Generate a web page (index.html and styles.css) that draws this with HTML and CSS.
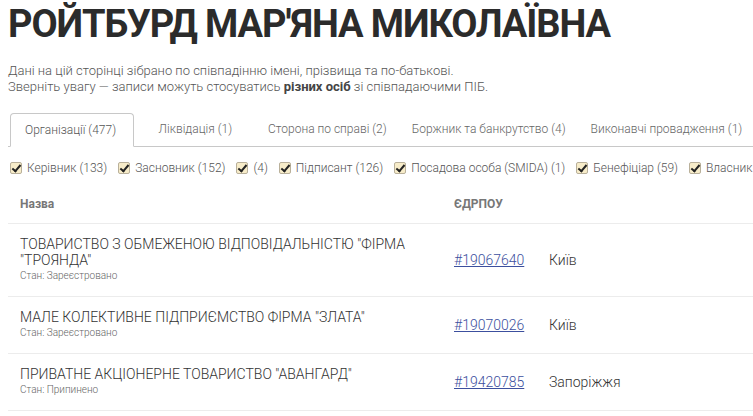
FILE: index.html
```html
<!DOCTYPE html>
<html lang="uk">
<head>
<meta charset="utf-8">
<title>Ройтбурд Мар'яна Миколаївна</title>
<link rel="stylesheet" href="styles.css">
</head>
<body>
<div class="page">
  <h1 class="title">РОЙТБУРД МАР'ЯНА МИКОЛАЇВНА</h1>
  <p class="note">Дані на цій сторінці зібрано по співпадінню імені, прізвища та по-батькові.<br>Зверніть увагу — записи можуть стосуватись <b>різних осіб</b> зі співпадаючими ПІБ.</p>

  <ul class="tabs">
    <li class="tab active">Організації (477)</li>
    <li class="tab tab-wide">Ліквідація (1)</li>
    <li class="tab">Сторона по справі (2)</li>
    <li class="tab">Боржник та банкрутство (4)</li>
    <li class="tab">Виконавчі провадження (1)</li>
  </ul>

  <div class="filters">
    <label class="filter"><span class="box"></span>Керівник (133)</label>
    <label class="filter"><span class="box"></span>Засновник (152)</label>
    <label class="filter"><span class="box"></span>(4)</label>
    <label class="filter"><span class="box"></span>Підписант (126)</label>
    <label class="filter"><span class="box"></span>Посадова особа (SMIDA) (1)</label>
    <label class="filter"><span class="box"></span>Бенефіціар (59)</label>
    <label class="filter"><span class="box"></span>Власник</label>
  </div>

  <table class="grid">
    <thead>
      <tr><th class="c-name">Назва</th><th class="c-code">ЄДРПОУ</th><th class="c-city"></th></tr>
    </thead>
    <tbody>
      <tr>
        <td class="c-name"><div class="org">ТОВАРИСТВО З ОБМЕЖЕНОЮ ВІДПОВІДАЛЬНІСТЮ "ФІРМА "ТРОЯНДА"</div><div class="state">Стан: Зареєстровано</div></td>
        <td class="c-code"><a href="#">#19067640</a></td>
        <td class="c-city">Київ</td>
      </tr>
      <tr>
        <td class="c-name"><div class="org">МАЛЕ КОЛЕКТИВНЕ ПІДПРИЄМСТВО ФІРМА "ЗЛАТА"</div><div class="state">Стан: Зареєстровано</div></td>
        <td class="c-code"><a href="#">#19070026</a></td>
        <td class="c-city">Київ</td>
      </tr>
      <tr>
        <td class="c-name"><div class="org">ПРИВАТНЕ АКЦІОНЕРНЕ ТОВАРИСТВО "АВАНГАРД"</div><div class="state">Стан: Припинено</div></td>
        <td class="c-code"><a href="#">#19420785</a></td>
        <td class="c-city">Запоріжжя</td>
      </tr>
    </tbody>
  </table>
</div>
</body>
</html>
```
FILE: styles.css
```css
html, body {
  margin: 0;
  padding: 0;
  background: #fff;
}
body {
  font-family: Roboto, "Noto Sans", sans-serif;
  color: #444;
  overflow: hidden;
}
.page {
  padding: 0 0 0 8px;
  width: 900px;
}
.title {
  margin: 0;
  padding-top: 2px;
  font-size: 38px;
  line-height: 44px;
  font-weight: 700;
  color: #2b2b2b;
  letter-spacing: -1.1px;
}
.note {
  margin: 17px 0 0;
  font-size: 13px;
  line-height: 16px;
  color: #555;
  font-weight: 300;
}
.note b {
  font-weight: 700;
  color: #444;
}
.tabs {
  list-style: none;
  margin: 18px 0 0;
  padding: 0 0 0 2px;
  display: flex;
  border-bottom: 1px solid #c8c8c8;
  height: 33px;
  white-space: nowrap;
}
.tab {
  height: 33px;
  line-height: 33px;
  padding: 0 12.5px;
  font-size: 12px;
  color: #666;
  font-weight: 300;
  box-sizing: border-box;
}
.tab.active {
  border: 1px solid #c8c8c8;
  border-bottom: 1px solid #fff;
  border-radius: 4px 4px 0 0;
  height: 34px;
  line-height: 32px;
  padding: 0 17px 0 14px;
  margin-right: 12px;
  background: #fff;
  color: #555;
}
.tab-wide {
  margin-right: 11px;
}
.filters {
  display: flex;
  gap: 11px;
  margin-top: 13px;
  padding-left: 2px;
  white-space: nowrap;
  font-size: 12px;
  line-height: 16px;
  color: #555;
  font-weight: 300;
}
.filter {
  display: flex;
  align-items: center;
}
.box {
  width: 12px;
  height: 12px;
  box-sizing: border-box;
  border: 1px solid #b9b09a;
  background: #f7ecc9;
  border-radius: 2px;
  margin-right: 5px;
  position: relative;
}
.box::after {
  content: "";
  position: absolute;
  left: 3px;
  top: 0px;
  width: 3px;
  height: 7px;
  border: solid #222;
  border-width: 0 2px 2px 0;
  transform: rotate(40deg);
}
.grid {
  border-collapse: collapse;
  margin-top: 8px;
  width: 850px;
}
.grid th {
  text-align: left;
  font-size: 12px;
  font-weight: 700;
  color: #777;
  height: 39px;
  padding: 0 12px;
  border-bottom: 1px solid #ececec;
}
.grid td {
  padding: 12px 12px 13px;
  border-bottom: 1px solid #ececec;
  vertical-align: middle;
  font-size: 14px;
  font-weight: 300;
  color: #333;
}
.c-name { width: 412px; }
.grid th.c-code, .grid td.c-code { width: 72px; padding-left: 10px; padding-right: 12px; }
.grid td.c-city { padding-left: 11px; }
.org {
  line-height: 16px;
  color: #333;
}
.state {
  font-size: 10px;
  line-height: 15px;
  color: #666;
  font-weight: 300;
}
.c-code a {
  color: #3c4f9e;
  text-decoration: underline;
}
```
